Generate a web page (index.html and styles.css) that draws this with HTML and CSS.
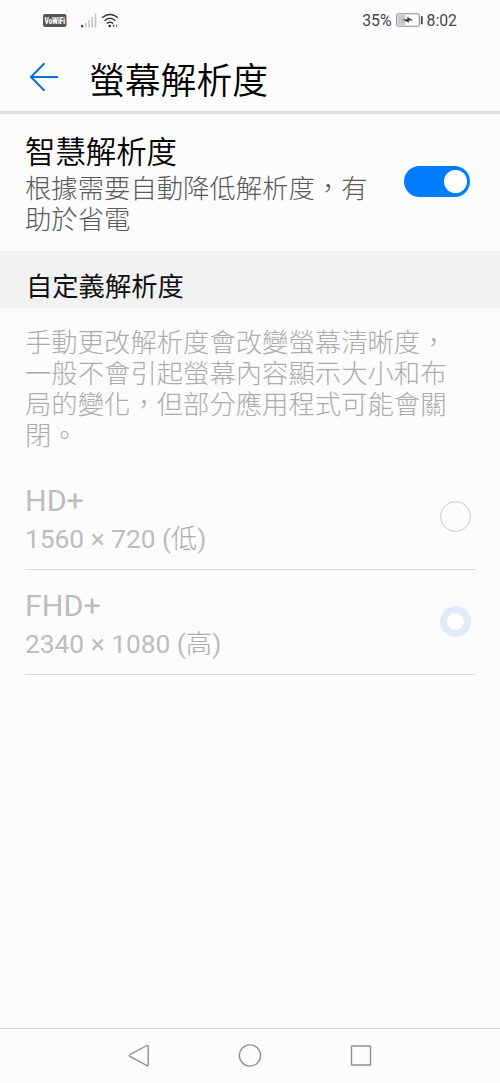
FILE: index.html
```html
<!DOCTYPE html>
<html lang="zh-Hant">
<head>
<meta charset="utf-8">
<title>螢幕解析度</title>
<link rel="stylesheet" href="styles.css">
</head>
<body>
<div class="screen">
  <div class="status">
    <div class="status-left">
      <svg class="vowifi" width="24" height="13" viewBox="0 0 24 13">
        <rect width="23.500" height="13" rx="2" fill="#555"/>
        <text x="1.500" y="9.700" textLength="20.500" lengthAdjust="spacingAndGlyphs">VoWiFi</text>
      </svg>
      <svg class="signal" width="16" height="15" viewBox="0 0 16 15">
        <path d="M1.200 12v2.400" stroke="#333" stroke-width="2"/>
        <path d="M4.700 10v4.400M8 7v7.400M11.200 4v10.400M14.500 .8v13.600" stroke="#c2c2c2" stroke-width="1.6"/>
      </svg>
      <svg class="wifi" width="18" height="15" viewBox="0 0 18 15" fill="none" stroke="#3c3c3c" stroke-width="1.5">
        <path d="M1 4.700Q9-2 17 4.700M3.500 7.700q5.500-4.800 11 0M5.800 10.500q3.200-2.600 6.400 0"/>
        <circle cx="8.700" cy="13" r="1.300" fill="#333" stroke="none"/>
        <path d="M13.300 11v3.400l-2-1.700zM15 11.200v3l1.600-1.500z" fill="#555" stroke="none"/>
      </svg>
    </div>
    <div class="status-right">
      <span>35%</span>
      <svg class="battery" width="27" height="14" viewBox="0 0 27 14">
        <rect x="2" y="2" width="7.500" height="10" fill="#c8c8c8"/>
        <rect x=".7" y=".7" width="22.600" height="12.600" rx="1.500" fill="none" stroke="#8c8c8c" stroke-width="1.1"/>
        <path d="M25.800 3.200v8" stroke="#444" stroke-width="1.8"/>
        <path d="M6.300 6.600l5.200-.3-.5-2.500 6.200 3.700-4.600-.1.500 2.400z" fill="#333"/>
      </svg>
      <span>8:02</span>
    </div>
  </div>
  <header class="header">
    <svg width="30" height="30" viewBox="0 0 30 30" fill="none" stroke="#0d6fd8" stroke-width="2">
      <path d="M15.500 1.200L2 15l13.500 13.800M2 15h27"/>
    </svg>
    <h1 class="title">螢幕解析度</h1>
  </header>
  <section class="smart">
    <div class="smart-text">
      <div class="name">智慧解析度</div>
      <div class="summary">根據需要自動降低解析度，有助於省電</div>
    </div>
    <div class="toggle"><span class="knob"></span></div>
  </section>
  <h2 class="section">自定義解析度</h2>
  <p class="note">手動更改解析度會改變螢幕清晰度，一般不會引起螢幕內容顯示大小和布局的變化，但部分應用程式可能會關閉。</p>
  <div class="options">
    <div class="option">
      <div>
        <div class="option-name">HD+</div>
        <div class="option-size">1560 × 720 (<span class="level">低</span>)</div>
      </div>
      <span class="radio"></span>
    </div>
    <div class="option">
      <div>
        <div class="option-name">FHD+</div>
        <div class="option-size">2340 × 1080 (<span class="level">高</span>)</div>
      </div>
      <span class="radio checked"></span>
    </div>
  </div>
  <nav class="nav">
    <svg width="24" height="24" viewBox="0 0 24 24"><path d="M20 1.500L2.800 10.700q-1 .8 0 1.600L20 21.700q1.200.4 1.200-.8V2.300q0-1.200-1.200-.8z"/></svg>
    <svg width="24" height="24" viewBox="0 0 24 24"><circle cx="12" cy="11.500" r="10.600"/></svg>
    <svg width="24" height="24" viewBox="0 0 24 24"><rect x="2.500" y="2" width="19" height="19" rx=".5"/></svg>
  </nav>
</div>
</body>
</html>
```

FILE: styles.css
```css
* { box-sizing: border-box; }
body {
  margin: 0;
  background: #fcfcfc;
  color: #000;
  font-family: Roboto, "Noto Sans CJK TC", sans-serif;
}
h1, h2, p { margin: 0; font-weight: 400; }
svg { display: block; flex: none; }
.screen { height: 1083px; display: flex; flex-direction: column; }
.status {
  height: 40px;
  padding: 0 43px 0 43px;
  display: flex;
  align-items: center;
  justify-content: space-between;
  font-size: 15.8px;
  color: #444;
}
.status-left, .status-right { display: flex; align-items: center; }
.status-right { gap: 4px; }
.vowifi { overflow: visible; }
.vowifi text { fill: #fff; font-size: 8.5px; font-weight: 900; }
.signal { margin-left: 14px; }
.wifi { margin-left: 4px; }
.header {
  height: 74px;
  padding: 3px 0 0 29px;
  display: flex;
  align-items: center;
  gap: 30px;
  border-bottom: 3px solid #dedede;
}
.title, .name { font-family: Roboto, "Noto Sans CJK TC DemiLight", "Noto Sans CJK TC", sans-serif; font-weight: 350; }
.title { padding-top: 9px; font-size: 35.8px; line-height: 52px; }
.smart {
  height: 137px;
  padding: 20px 30px 0 25px;
  display: flex;
  justify-content: space-between;
}
.smart-text { width: 350px; }
.name { font-size: 30.4px; line-height: 38px; margin-bottom: 2px; }
.summary { font-size: 26.35px; line-height: 31px; color: #5a5a5a; font-weight: 300; }
.toggle {
  width: 66px;
  height: 31px;
  margin-top: 32px;
  padding: 0 3px;
  border-radius: 16px;
  background: #007dff;
  display: flex;
  align-items: center;
  justify-content: flex-end;
}
.knob { width: 23px; height: 23px; border-radius: 50%; background: #fff; }
.section {
  height: 57px;
  padding-left: 26px;
  background: #f2f2f2;
  color: #111;
  font-size: 26.3px;
  font-weight: 400;
  line-height: 72px;
}
.note {
  width: 450px;
  padding: 20px 0 0 25px;
  font-size: 26.35px;
  font-weight: 300;
  line-height: 31px;
  color: #acacac;
}
.options { padding: 13px 25px 0; color: #bdbdbd; }
.option {
  height: 105px;
  padding: 0 4px 1px 0;
  display: flex;
  align-items: center;
  justify-content: space-between;
  border-bottom: 1px solid #d9d9d9;
}
.option-name { font-size: 30.4px; line-height: 36px; margin-top: 8px; }
.option-size { font-size: 26.3px; line-height: 40px; }
.level { font-weight: 300; color: #acacac; }
.radio {
  width: 31px;
  height: 31px;
  border: 1px solid #c9c9c9;
  border-radius: 50%;
}
.checked { border: 7.5px solid #e0ebfa; background: #fff; }
.nav {
  height: 55px;
  margin-top: auto;
  padding: 0 127px;
  border-top: 1px solid #d8d8d8;
  display: flex;
  align-items: center;
  justify-content: space-between;
}
.nav svg { fill: none; stroke: #909090; stroke-width: 1.4; }
```
